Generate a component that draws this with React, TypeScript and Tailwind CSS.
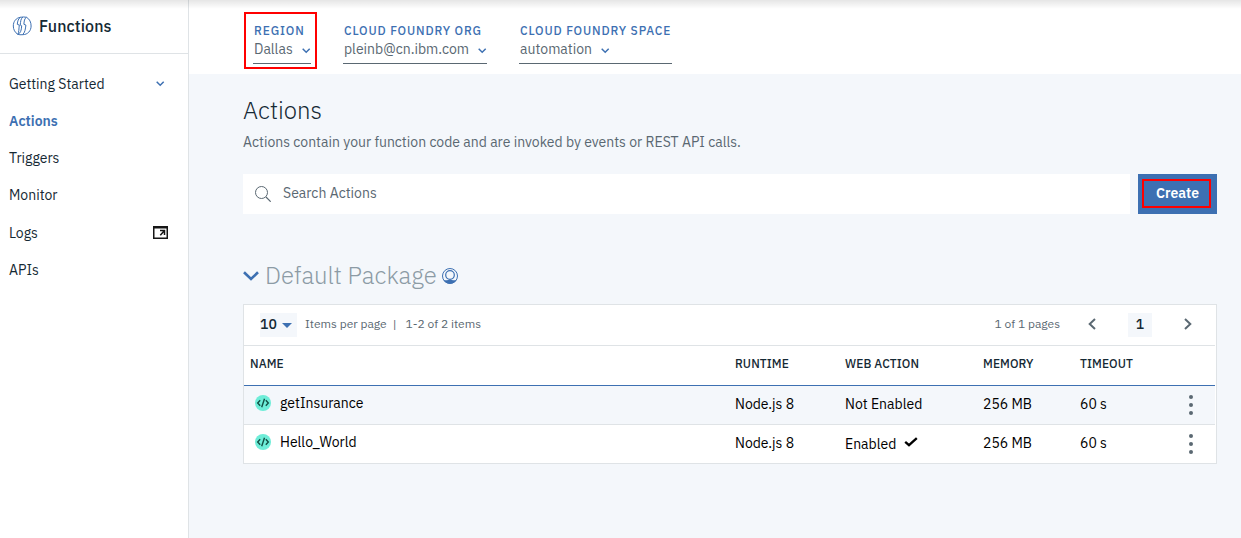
import React from 'react';

function Chevron({ className = '' }: { className?: string }) {
  return (
    <svg className={className} width="9" height="6" viewBox="0 0 9 6" fill="none" stroke="#3d70b2" strokeWidth="1.5">
      <path d="M0.700 0.800l3.500 3.500L7.700 0.800" />
    </svg>
  );
}

function FunctionsLogo() {
  return (
    <svg className="-mt-[2px]" width="20" height="20" viewBox="0 0 20 20" fill="none" stroke="#3d70b2" strokeWidth="1">
      <path d="M8.500 1.300C4 1.900 1.300 5.500 1.300 10c0 3.600 1.700 6.500 4.500 8.300" />
      <path d="M8.500 1.300C6.300 2.600 5.600 5 5.300 8.300l2 .8c-.5 3.800-.3 7.200-1.500 9.200 2.800-.9 3.600-4.100 3.900-8.500L8.200 9C8.700 5.500 8.600 2.500 11 1.100" />
      <path d="M8.500 1.300Q11.500.600 14.500 1.300" />
      <path d="M14.500 1.300C12.300 2.600 12.200 5 11.900 8.300l2 .8c-.5 3.800-.9 7.700-3.400 9.600" />
      <path d="M14.500 1.300c3.100 1.700 4.600 4.900 4.600 8.700 0 4.700-3.200 8.700-8.600 8.700-1.800.2-3.400.1-4.700-.4" />
    </svg>
  );
}

function LaunchIcon() {
  return (
    <svg width="15" height="13" viewBox="0 0 15 13" fill="none">
      <path d="M0 0h15v13H0zM1.500 2.500v9h12v-9z" fill="#161616" fillRule="evenodd" />
      <path d="M7 4.500h4.500V9M11.300 4.700L7.300 9.200" stroke="#161616" strokeWidth="1.500" />
    </svg>
  );
}

function CodeBadge() {
  return (
    <svg width="16" height="16" viewBox="0 0 16 16" fill="none">
      <circle cx="8" cy="8" r="8" fill="#6eedd8" />
      <path d="M5.200 5.300L2.700 8l2.500 2.700M10.800 5.300L13.300 8l-2.500 2.700M9.500 3.700L6.700 12.300" stroke="#124f44" strokeWidth="1.400" />
    </svg>
  );
}

function UserBadge() {
  return (
    <svg className="-mt-px" width="16" height="16" viewBox="0 0 16 16" fill="none" stroke="#3d70b2">
      <circle cx="8" cy="8" r="7.500" />
      <circle cx="8" cy="7" r="4.300" strokeWidth="1.200" />
      <path d="M1.500 12.300h3.200q3.300-1 6.600 0h3.200A7.800 7.800 0 0 1 1.500 12.300z" fill="#3d70b2" stroke="none" />
    </svg>
  );
}

function Kebab() {
  return (
    <svg width="4" height="20" viewBox="0 0 4 20" fill="#5a6872">
      <circle cx="2" cy="2" r="2" />
      <circle cx="2" cy="10" r="2" />
      <circle cx="2" cy="18" r="2" />
    </svg>
  );
}

function Picker({ label, value, width }: { label: string; value: string; width: string }) {
  return (
    <div className={`${width} h-[42px] border-b border-[#5a6872] pl-px`}>
      <div className="h-[15px] pt-px whitespace-nowrap text-[12px] leading-[15px] font-medium tracking-[0.84px] text-[#3d70b2]">{label}</div>
      <div className="mt-[2px] flex h-5 items-center text-[14px] leading-5 text-[#5a6872]">
        {value}
        <Chevron className="mt-[3px] ml-[9px]" />
      </div>
    </div>
  );
}

const grid = 'grid grid-cols-[485px_110px_138px_97px_96px_1fr] pl-[6px] mr-px';

const rows = [
  { name: 'getInsurance', enabled: false, style: 'h-[39px] border-b border-[#dfe3e6] bg-[#f4f7fb]' },
  { name: 'Hello_World', enabled: true, style: 'h-[38px]' },
];

export default function App() {
  return (
    <div className="relative flex h-[538px] w-[1241px] overflow-hidden bg-white font-['IBM_Plex_Sans','Roboto',sans-serif] text-[14px] leading-5 text-[#152934]">
      <div className="pointer-events-none absolute inset-x-0 top-0 h-[9px] bg-gradient-to-b from-black/10 to-transparent" />

      <aside className="w-[189px] shrink-0 border-r border-[#dfe3e6]">
        <div className="flex h-[54px] items-center border-b border-[#dfe3e6] pl-3 text-[16px]">
          <FunctionsLogo />
          <span className="-mt-[2px] ml-[7px] font-medium tracking-[0.1px]">Functions</span>
        </div>
        <nav className="flex flex-col pt-[11px] pl-[9px]">
          <div className="flex h-[37px] items-center justify-between pr-[23px]">
            Getting Started
            <Chevron className="mt-px" />
          </div>
          <div className="flex h-[37px] items-center font-semibold text-[#3d70b2]">Actions</div>
          <div className="flex h-[37px] items-center">Triggers</div>
          <div className="flex h-[37px] items-center">Monitor</div>
          <div className="flex h-[38px] items-center justify-between pt-px pr-[20px]">
            Logs
            <LaunchIcon />
          </div>
          <div className="flex h-[37px] items-center">APIs</div>
        </nav>
      </aside>

      <main className="flex flex-1 flex-col bg-[#f4f7fb]">
        <header className="flex h-[74px] shrink-0 bg-white pt-[12px] pl-[55px]">
          <div className="h-[57px] w-[73px] border-2 border-[#ff0000] pt-[8px] pl-[7px]">
            <Picker label="REGION" value="Dallas" width="w-[58px]" />
          </div>
          <div className="flex gap-8 pt-[10px] pl-[26px]">
            <Picker label="CLOUD FOUNDRY ORG" value="pleinb@cn.ibm.com" width="w-[144px]" />
            <Picker label="CLOUD FOUNDRY SPACE" value="automation" width="w-[153px]" />
          </div>
        </header>

        <div className="pr-6 pl-[54px]">
          <h1 className="mt-[20px] text-[24px] leading-8 font-light">Actions</h1>
          <p className="mt-[6px] text-[#5a6872]">Actions contain your function code and are invoked by events or REST API calls.</p>

          <div className="mt-[22px] flex h-10 gap-2">
            <div className="flex flex-1 items-center bg-white pl-3 text-[#5a6872]">
              <svg width="16" height="16" viewBox="0 0 16 16" fill="none" stroke="#5a6872">
                <circle cx="6.500" cy="6.500" r="6" />
                <path d="M11 11l4.700 4.700" strokeWidth="1.200" />
              </svg>
              <span className="ml-3 -mt-[3px]">Search Actions</span>
            </div>
            <button className="flex w-[79px] bg-[#3d70b2] pt-[5px] pl-1 font-semibold text-white">
              <span className="flex h-[29px] w-[69px] items-center justify-center border-2 border-[#ff0000] pb-[2px] pl-[2px]">Create</span>
            </button>
          </div>

          <h2 className="mt-[46px] flex h-8 items-center text-[24px] leading-8 font-light text-[#8c9ba5]">
            <svg width="16" height="10" viewBox="0 0 16 10" fill="none" stroke="#3d70b2" strokeWidth="2.600">
              <path d="M1 1.300l7 6.700 7-6.700" />
            </svg>
            <span className="-mt-[2px] mr-[5px] ml-[6px]">Default Package</span>
            <UserBadge />
          </h2>

          <section className="mt-3 h-[160px] border border-[#dfe3e6] bg-white">
            <div className="mr-px flex h-[41px] items-center border-b border-[#dfe3e6] pr-[23px] pl-4 text-[12px] text-[#5a6872]">
              <div className="-mt-px flex h-6 w-[37px] items-center text-[14px] text-[#152934] bg-[#f4f7fb]">
                <span className="-mt-[2px] font-medium">10</span>
                <svg className="mt-px ml-[5px]" width="10" height="5" viewBox="0 0 10 5" fill="#3d70b2">
                  <path d="M0 0h10L5 5z" />
                </svg>
              </div>
              <span className="-mt-[2px] ml-2">Items per page</span>
              <span className="-mt-[2px] ml-[6px]">|</span>
              <span className="-mt-[2px] ml-[9px]">1-2 of 2 items</span>
              <span className="-mt-[2px] ml-auto">1 of 1 pages</span>
              <svg className="-mt-[3px] ml-7" width="8" height="12" viewBox="0 0 8 12" fill="none" stroke="#5a6872" strokeWidth="2">
                <path d="M7 1L1.700 6 7 11" />
              </svg>
              <span className="-mt-px ml-8 flex size-6 items-center justify-center bg-[#f4f7fb] pb-[2px] text-[14px] font-medium text-[#152934]">1</span>
              <svg className="-mt-[3px] ml-8" width="8" height="12" viewBox="0 0 8 12" fill="none" stroke="#5a6872" strokeWidth="2">
                <path d="M1 1l5.300 5L1 11" />
              </svg>
            </div>

            <div className={`${grid} h-10 items-center border-b border-[#3d70b2] pb-[3px] text-[12px] font-medium tracking-[0.1px]`}>
              <span>NAME</span>
              <span>RUNTIME</span>
              <span>WEB ACTION</span>
              <span>MEMORY</span>
              <span>TIMEOUT</span>
            </div>

            {rows.map((row) => (
              <div key={row.name} className={`${grid} ${row.style} items-center pb-[3px] text-black`}>
                <span className="-mt-[2px] flex items-center gap-[9px] pl-[5px]">
                  <CodeBadge />
                  {row.name}
                </span>
                <span>Node.js 8</span>
                {row.enabled ? (
                  <span className="mt-[2px] flex items-center gap-2">
                    Enabled
                    <svg className="-mt-[3px]" width="14" height="10" viewBox="0 0 14 10" fill="none" stroke="#000" strokeWidth="2.300">
                      <path d="M1.200 4.800l3.800 3.400L12.800 1.100" />
                    </svg>
                  </span>
                ) : (
                  <span>Not Enabled</span>
                )}
                <span>256 MB</span>
                <span>60 s</span>
                <span className="mt-[2px] pl-[13px]">
                  <Kebab />
                </span>
              </div>
            ))}
          </section>
        </div>
      </main>
    </div>
  );
}
